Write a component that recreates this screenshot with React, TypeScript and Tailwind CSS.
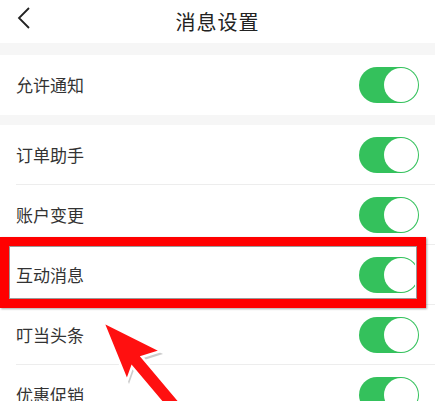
import React from "react";

function Toggle() {
  return (
    <div className="w-[60px] h-[36px] rounded-full bg-[#34c15c] flex items-center justify-end pr-[1px]">
      <div className="w-[34px] h-[34px] rounded-full bg-white" />
    </div>
  );
}

function Row({ label, divider }: { label: string; divider?: boolean }) {
  return (
    <div className="bg-white pl-4">
      <div
        className={
          "h-[60px] flex items-center justify-between pr-4 " +
          (divider ? "border-b border-[#ededed]" : "")
        }
      >
        <span className="text-[17px] text-[#333333]">{label}</span>
        <Toggle />
      </div>
    </div>
  );
}

export default function App() {
  return (
    <div
      className="relative w-[435px] h-[401px] overflow-hidden bg-[#f6f6f6]"
      style={{ fontFamily: '"Noto Sans CJK SC", "Noto Sans", sans-serif' }}
    >
      <div className="h-[43px] bg-white relative flex items-center justify-center">
        <svg
          className="absolute left-[16px] top-[6px]"
          width="16"
          height="24"
          viewBox="0 0 16 24"
        >
          <path d="M13 2 L3 12 L13 22" fill="none" stroke="#222" strokeWidth="1.8" />
        </svg>
        <span className="text-[20px] text-[#222222] tracking-[1px]">消息设置</span>
      </div>
      <div className="h-[12px]" />
      <Row label="允许通知" />
      <div className="h-[10px]" />
      <Row label="订单助手" divider />
      <Row label="账户变更" divider />
      <Row label="互动消息" divider />
      <Row label="叮当头条" divider />
      <Row label="优惠促销" />

      {/* highlight box */}
      <div className="absolute left-0 top-[237px] w-[426px] h-[71px] border-[9px] border-[#ff0000] shadow-[1px_1px_2px_rgba(0,0,0,0.35)]">
        <div className="w-full h-full border border-[#9a9a9a] shadow-[inset_0_0_0_1px_#ffffff]" />
      </div>

      {/* arrow */}
      <svg className="absolute left-0 top-0" width="435" height="401" viewBox="0 0 435 401">
        <polygon
          points="105,325 163,354 144,360 193,418 183,428 134,370 129,384"
          fill="#9a9a9a"
          opacity="0.5"
        />
        <polygon
          points="103,322 161,351 142,357 191,415 181,425 132,367 127,381"
          fill="#ff1010"
          stroke="#ffffff"
          strokeWidth="2.5"
          strokeLinejoin="miter"
        />
      </svg>
    </div>
  );
}
